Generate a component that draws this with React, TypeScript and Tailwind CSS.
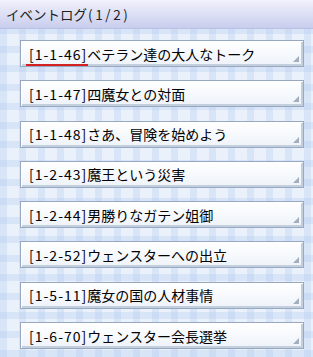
const items = [
  { code: "[1-1-46]", title: "ベテラン達の大人なトーク", active: true },
  { code: "[1-1-47]", title: "四魔女との対面" },
  { code: "[1-1-48]", title: "さあ、冒険を始めよう" },
  { code: "[1-2-43]", title: "魔王という災害" },
  { code: "[1-2-44]", title: "男勝りなガテン姐御" },
  { code: "[1-2-52]", title: "ウェンスターへの出立" },
  { code: "[1-5-11]", title: "魔女の国の人材事情" },
  { code: "[1-6-70]", title: "ウェンスター会長選挙" },
];

function Grip() {
  return (
    <svg width="6" height="6" viewBox="0 0 6 6" className="absolute bottom-[4px] right-[4px]">
      <path d="M6 0 L6 6 L0 6 Z" fill="#a3aebf" />
    </svg>
  );
}

export default function App() {
  return (
    <div className="w-[313px] h-[357px] overflow-hidden bg-[#eaf1fb] bg-[repeating-linear-gradient(90deg,rgba(175,200,238,0.3)_0_7px,transparent_7px_19px),repeating-linear-gradient(0deg,rgba(175,200,238,0.3)_0_7px,transparent_7px_19px)] font-['Noto_Sans_CJK_JP','Noto_Sans',sans-serif] text-black">
      <div className="h-[29px] flex items-center pl-[6px] bg-gradient-to-b from-[#f1f2fb] to-[#c9cdee] border-b border-[#b8c0e4] text-[13.5px] text-[#222]">
        イベントログ<span className="tracking-[2.6px] pl-[1px]">(1/2)</span>
      </div>
      <div className="flex flex-col gap-[13.3px] pt-[11px] pl-[20px] pr-[9px]">
        {items.map((it) => (
          <div
            key={it.code}
            className="relative h-[27px] flex items-center pl-[8px] border border-[#97a8c0] bg-gradient-to-b from-white to-[#eef3fa] shadow-[inset_1px_1px_0_#ffffff,inset_-2px_-2px_0_#c4cfdd] text-[14px] leading-none"
          >
            <span className="relative tracking-[1px]">
              {it.code}
              {it.active && (
                <span className="absolute left-[-3px] right-[-1px] bottom-[-5px] h-[2px] bg-[#d42020]" />
              )}
            </span>
            <span>{it.title}</span>
            <Grip />
          </div>
        ))}
      </div>
    </div>
  );
}
